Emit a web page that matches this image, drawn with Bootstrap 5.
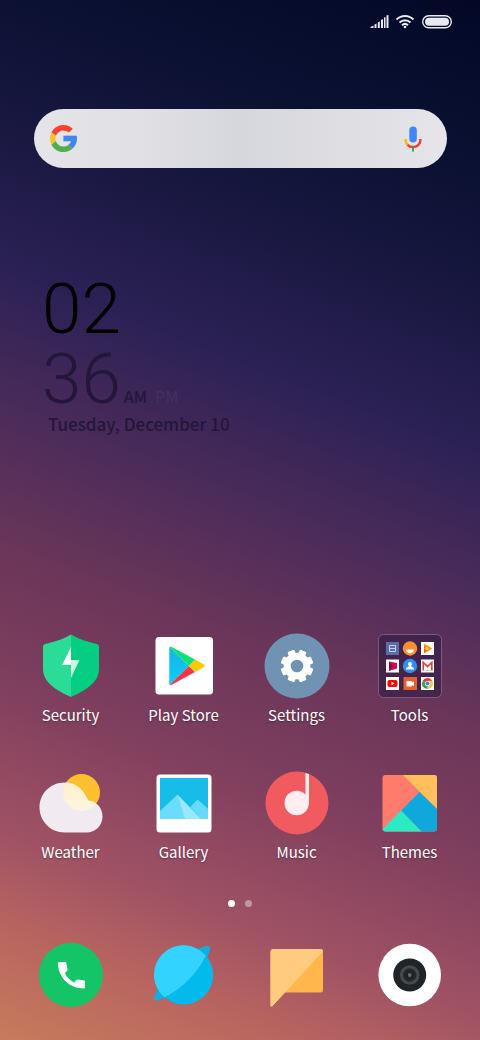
<!DOCTYPE html>
<html lang="en">
<head>
<meta charset="utf-8">
<meta name="viewport" content="width=device-width, initial-scale=1">
<title>Home screen</title>
<link href="https://cdn.jsdelivr.net/npm/bootstrap@5.3.0/dist/css/bootstrap.min.css" rel="stylesheet">
<style>
  body {
    font-family: "Noto Sans CJK SC", "Noto Sans", sans-serif;
    color: #fff;
    background: linear-gradient(201deg, #020826 0%, #0b1132 14%, #17173f 24%, #2c2155 37%, #4a2b5a 48%, #6b3659 60%, #803f5e 71%, #a05264 83%, #b66360 90%, #c87b5c 100%);
    min-height: 100vh;
  }
  .status-icons { padding: 14px 28px 0; gap: 6px; height: 44px; }
  .search-wrap { padding: 65px 33px 0 34px; }
  .search-bar {
    height: 59px; border-radius: 30px; padding: 0 20px 0 16px;
    background: linear-gradient(90deg, #e5e4e8 0%, #e0e0e5 25%, #d6d7dc 50%, #dddde2 72%, #e6e5e9 100%);
  }
  .search-bar input { outline: 0; min-width: 0; }
  .clock { padding: 106px 42px 0; }
  .clock-digits { font-family: Roboto, "Noto Sans", sans-serif; font-size: 71px; line-height: 70px; font-weight: 300; }
  .hours { color: #000; }
  .minutes, .meridiem, .date { color: #24163a; }
  .meridiem, .date { font-weight: 500; }
  .meridiem { font-size: 16px; line-height: 24px; margin-left: 3px; }
  .meridiem-off { color: #452e60; margin-left: 8px; }
  .date { font-size: 17px; line-height: 20px; padding-left: 6px; }
  .launcher { padding: 0 14px; }
  .app { color: #fff; font-size: 15px; line-height: 24px; text-shadow: 0 1px 2px rgba(0,0,0,.35); }
  .app svg { width: 66px; height: 66px; display: block; margin-bottom: 4px; }
  .app-rows { row-gap: 43px; }
  .page-dots { gap: 10px; padding: 36px 0 35px; }
  .dot { width: 7px; height: 7px; padding: 0; border: 0; border-radius: 50%; background: #fff; }
  .dot-off { opacity: .4; }
  .dock { padding-bottom: 28px; }
</style>
</head>
<body class="d-flex flex-column">
<header class="status-icons d-flex justify-content-end align-items-start">
  <svg width="19" height="15" viewBox="0 0 19 15" fill="#e9eaf0" role="img" aria-label="Signal">
    <path d="M.5 14V13L3.500 11.500V14zM4.500 10.500L6.500 9.500V14H4.500zM7.800 8.500L9.800 7.500V14H7.800zM11 6L13 5V14H11zM14 3.500L15.500 3V14H14zM16.500 1.500L18.500 1V14H16.500z"/>
  </svg>
  <svg width="20" height="15" viewBox="0 0 20 15" fill="none" stroke="#e9eaf0" stroke-width="2" role="img" aria-label="Wi-Fi">
    <path d="M1.500 5.500C6.500.7 13.500.7 18.500 5.500M4.500 8.500C7.700 5.500 12.300 5.500 15.500 8.500M7 11.200C8.900 9.500 11.100 9.500 13 11.200"/>
    <circle cx="10" cy="13" r="1.300" fill="#e9eaf0" stroke="none"/>
  </svg>
  <svg width="31" height="15" viewBox="0 0 31 15" fill="#e9eaf0" role="img" aria-label="Battery full">
    <rect x="1.700" y="1.700" width="28.600" height="12" rx="6" fill="none" stroke="#e9eaf0" stroke-width="1.400"/>
    <rect x="4" y="3.700" width="24" height="8" rx="4"/>
  </svg>
</header>

<div class="search-wrap">
  <form class="search-bar d-flex align-items-center" role="search">
    <svg width="27" height="27" viewBox="4 4 40 40" aria-hidden="true">
      <path fill="#fbc02d" d="M43.600 20H24v8h11.300C33.700 32.700 29.200 36 24 36c-6.600 0-12-5.400-12-12s5.400-12 12-12c3.100 0 5.800 1.200 8 3l5.600-5.600C34 6.100 29.300 4 24 4 13 4 4 13 4 24s9 20 20 20 20-9 20-20c0-1.300-.1-2.700-.4-4z"/>
      <path fill="#f44336" d="M6.300 14.700l6.600 4.800C14.700 15.100 19 12 24 12c3.100 0 5.800 1.200 8 3l5.600-5.600C34 6.100 29.300 4 24 4 16.300 4 9.700 8.300 6.300 14.700z"/>
      <path fill="#4caf50" d="M24 44c5.200 0 9.900-2 13.400-5.200l-6.200-5.200C29.200 35.100 26.700 36 24 36c-5.200 0-9.600-3.300-11.300-7.900l-6.500 5C9.500 39.600 16.200 44 24 44z"/>
      <path fill="#4285f4" d="M43.600 20H24v8h11.300c-.8 2.200-2.200 4.200-4.100 5.600l6.200 5.200C37 39.200 44 34 44 24c0-1.300-.1-2.700-.4-4z"/>
    </svg>
    <input class="flex-grow-1 border-0 bg-transparent" type="text" aria-label="Search">
    <button class="btn p-0 border-0 d-flex" type="button" aria-label="Voice search">
      <svg width="28" height="28" viewBox="0 0 28 28" fill="none" stroke-width="2.500">
        <rect x="10.300" y="1.500" width="7.500" height="16" rx="3.750" fill="#4285f4"/>
        <path stroke="#fbbc05" d="M6.500 14C6.500 17 7.500 19 9 20.200"/>
        <path stroke="#ea4335" d="M8.600 19.800C11.500 22.800 16.500 22.800 19.400 19.800C21 18.200 21.500 16.500 21.500 14"/>
        <path stroke="#34a853" stroke-width="2" d="M14 22.500V26.500"/>
      </svg>
    </button>
  </form>
</div>

<section class="clock">
  <div class="clock-digits hours">02</div>
  <div class="d-flex align-items-baseline">
    <span class="clock-digits minutes">36</span>
    <span class="meridiem">AM</span><span class="meridiem meridiem-off">PM</span>
  </div>
  <div class="date">Tuesday, December 10</div>
</section>

<main class="launcher mt-auto">
  <div class="app-rows row row-cols-4 g-0">
    <a href="#security" class="app col d-flex flex-column align-items-center text-decoration-none">
      <svg viewBox="0 0 66 66" aria-hidden="true">
        <path fill="#2bdc96" d="M33 1.500C26 6 16 9 7 11Q5 11.500 5 13.500V36C5 50 20 58 33 64z"/>
        <path fill="#04cf80" d="M33 1.500C40 6 50 9 59 11Q61 11.500 61 13.500V36C61 50 46 58 33 64z"/>
        <path fill="#fff" d="M33 14L24 32H33z"/>
        <path fill="#c9f9e4" d="M33 27H41.500L33 45z"/>
      </svg>Security</a>
    <a href="#play" class="app col d-flex flex-column align-items-center text-decoration-none">
      <svg viewBox="0 0 66 66" aria-hidden="true">
        <defs><linearGradient id="playBlue" x1="0" y1="0" x2="0" y2="1"><stop offset="0" stop-color="#12b5e0"/><stop offset="1" stop-color="#0fcdfb"/></linearGradient></defs>
        <rect x="4.500" y="4" width="57.500" height="57.500" rx="3.500" fill="#fff"/>
        <path fill="url(#playBlue)" d="M18.500 14L38 33L18.500 52Q18.300 51 18.300 50V16Z"/>
        <path fill="#0be276" d="M18.500 14Q20 13.500 22 14.800L44 26.500L38 33z"/>
        <path fill="#ef3547" d="M18.500 52Q20 52.500 22 51L44 39L38 33z"/>
        <path fill="#fdc70c" d="M44 26.500L53 31.500Q54.500 32.800 53 34L44 39L38 33z"/>
      </svg>Play Store</a>
    <a href="#settings" class="app col d-flex flex-column align-items-center text-decoration-none">
      <svg viewBox="0 0 66 66" aria-hidden="true">
        <circle cx="33" cy="33" r="32.500" fill="#7193b3"/>
        <g fill="#fff" transform="translate(33 33)">
          <rect x="-3.700" y="-16.300" width="7.400" height="32.600" rx="1.300" transform="rotate(22.500)"/><rect x="-3.700" y="-16.300" width="7.400" height="32.600" rx="1.300" transform="rotate(67.500)"/><rect x="-3.700" y="-16.300" width="7.400" height="32.600" rx="1.300" transform="rotate(112.500)"/><rect x="-3.700" y="-16.300" width="7.400" height="32.600" rx="1.300" transform="rotate(157.500)"/>
          <circle r="13.300"/>
        </g>
        <circle cx="33" cy="33" r="6.300" fill="#7193b3"/>
      </svg>Settings</a>
    <a href="#tools" class="app col d-flex flex-column align-items-center text-decoration-none">
      <svg viewBox="0 0 66 66" aria-hidden="true">
        <rect x="1.500" y="1.500" width="63" height="63" rx="5" fill="#2b1840" fill-opacity=".55" stroke="#8a7191" stroke-opacity=".7"/>
        <rect x="9" y="9" width="13" height="13" fill="#5a6cab"/>
        <path d="M12.500 12.500H18.500V18.500H12.500zM12.500 15.500H18.500" fill="none" stroke="#c7cff0"/>
        <circle cx="33" cy="15.500" r="7.200" fill="#f78f2f"/><path fill="#fff" d="M29 16.500H37C36.500 21.500 29.500 21.500 29 16.500"/>
        <rect x="44" y="9" width="13" height="13" fill="#fff"/><path fill="#ffa313" d="M47 10.500L55.500 15.500L47 20.500z"/><path fill="#f0592b" d="M47 13L51 15.500L47 20.500z"/><circle cx="50" cy="15.500" r="2.300" fill="#ffd23c" stroke="#e8662b" stroke-width=".7"/>
        <rect x="9" y="26.500" width="13" height="13" fill="#fff"/><path fill="#d00c50" d="M12 28.500L20 30V35.500L12 38z"/><path fill="#8d0b42" d="M12 28.500L16 33L12 38z"/>
        <circle cx="33" cy="33" r="7.200" fill="#2b91f4"/><circle cx="33" cy="31" r="2" fill="#fff"/><path fill="#fff" d="M31.800 31.500H34.200V33.500L37 35V36.500H29V35L31.800 33.500z"/>
        <rect x="44" y="26.500" width="13" height="13" fill="#fff"/><path fill="none" stroke="#dc4639" stroke-width="1.700" d="M46.200 37.500V29.500L50.500 33.500L54.800 29.500V37.500"/><path fill="none" stroke="#bbb" stroke-width=".6" d="M47.500 37.500H53.500"/>
        <rect x="9" y="44" width="13" height="13" fill="#fff"/><rect x="10.500" y="47" width="10" height="7" rx="2" fill="#f00"/><path fill="#fff" d="M14.500 48.800L17.500 50.500L14.500 52.200z"/>
        <rect x="26.500" y="44" width="13.500" height="13" fill="#e0622f"/><path fill="#fff" d="M29.500 48H34.800V49.500L37 48.500V53L34.800 52V53.500H29.500z"/>
        <rect x="44" y="44" width="13" height="13" fill="#fff"/>
        <g transform="translate(50.500 50.500)"><path fill="#e23a2e" d="M0 0L-4.800 -2.800A5.500 5.500 0 0 1 4.800 -2.800z"/><path fill="#fcc934" d="M0 0V-2.800H4.800A5.500 5.500 0 0 1 0 5.500z"/><path fill="#2ea350" d="M0 0L0 5.500A5.500 5.500 0 0 1 -4.800 -2.800z"/><circle r="2.600" fill="#fff"/><circle r="2" fill="#4285f4"/></g>
      </svg>Tools</a>
    <a href="#weather" class="app col d-flex flex-column align-items-center text-decoration-none">
      <svg viewBox="0 0 66 66" aria-hidden="true">
        <defs><linearGradient id="cloudSun" x1="0" y1="0" x2="0" y2="1"><stop offset="0" stop-color="#ffefc4"/><stop offset="1" stop-color="#fdf5e2"/></linearGradient>
        <clipPath id="cloudClip"><path d="M26.500 12.500C38 12.500 46 20 50 30.500C58 31 64.500 37.500 64.500 46.500C64.500 55.500 57.500 62.500 48.500 62.500H26.500C12.500 62.500 1.500 51 1.500 37.500C1.500 23.500 12.500 12.500 26.500 12.500z"/></clipPath></defs>
        <circle cx="43.500" cy="22.500" r="18.500" fill="#fcbf2d"/>
        <g clip-path="url(#cloudClip)"><rect width="66" height="66" fill="#f1eaf0"/><circle cx="43.500" cy="22.500" r="18.500" fill="url(#cloudSun)"/></g>
      </svg>Weather</a>
    <a href="#gallery" class="app col d-flex flex-column align-items-center text-decoration-none">
      <svg viewBox="0 0 66 66" aria-hidden="true">
        <rect x="5.500" y="4.500" width="55" height="58" rx="3.500" fill="#fff"/>
        <rect x="9" y="8" width="48" height="41" fill="#17bce8"/>
        <path fill="#4bd1f8" d="M37 40L46.500 29.500L57 39V49H37z"/><path fill="#66dafd" d="M40 36.500L46.500 29.500L57 39V49H50z"/>
        <path fill="#6adcff" d="M9 41L26.500 24.500L36 49H9z"/><path fill="#9ae8ff" d="M26.500 24.500L50 49H34z"/>
      </svg>Gallery</a>
    <a href="#music" class="app col d-flex flex-column align-items-center text-decoration-none">
      <svg viewBox="0 0 66 66" aria-hidden="true">
        <circle cx="33" cy="33" r="31.500" fill="#f15b60"/>
        <circle cx="32.700" cy="33" r="12.200" fill="#ffedef"/><path fill="#ffedef" d="M41.500 3L45 4V33H41.500z"/>
      </svg>Music</a>
    <a href="#themes" class="app col d-flex flex-column align-items-center text-decoration-none">
      <svg viewBox="0 0 66 66" aria-hidden="true">
        <clipPath id="themeClip"><rect x="5.500" y="5" width="54.500" height="56.500" rx="3"/></clipPath>
        <g clip-path="url(#themeClip)"><rect width="66" height="66" fill="#ff7c6d"/><path fill="#ffc05c" d="M26 5H60V39z"/><path fill="#0fa8dc" d="M42.500 22L60 39V62H45L24 40.500z"/><path fill="#2bebc4" d="M24 40.500L45 62H3z"/></g>
      </svg>Themes</a>
  </div>
  <nav class="page-dots d-flex justify-content-center" aria-label="Home pages">
    <button class="dot" type="button" aria-label="Page 1"></button>
    <button class="dot dot-off" type="button" aria-label="Page 2"></button>
  </nav>
  <nav class="dock row row-cols-4 g-0" aria-label="Dock">
    <a href="#phone" class="app col d-flex flex-column align-items-center" aria-label="Phone">
      <svg viewBox="0 0 66 66"><circle cx="33" cy="33" r="32" fill="#13c567"/><path fill="#fff" d="M20 21Q20 20 21 20H27.500Q28.200 20 28.300 21L29.500 27.500Q29.600 28.500 29 29L26.800 31C28.500 35 32 38.500 36.500 40.500L38 38Q38.500 37.300 39.500 37.400L46 38.500Q47 38.700 47 39.500V45.500Q47 46.500 46 46.500C31.500 46.500 20 35.500 20 21z"/></svg></a>
    <a href="#browser" class="app col d-flex flex-column align-items-center" aria-label="Browser">
      <svg viewBox="0 0 66 66"><path fill="#12aee2" d="M46 8C51 4.500 57 3 58.500 4.500C60 6 58.500 12 54 19zM9 43C5 49 2.500 56 4 58C6 60 14 56 20 52z"/><circle cx="32.700" cy="33" r="29.500" fill="#02baeb"/><path fill="#33d3ff" d="M54.800 13.500A29.500 29.500 0 1 0 13.300 55.200C26 50 46 33 54.800 13.500z"/></svg></a>
    <a href="#messages" class="app col d-flex flex-column align-items-center" aria-label="Messages">
      <svg viewBox="0 0 66 66"><path fill="#ffb74b" d="M9.500 7H56.500Q59 7 59 9.500V48Q59 50.500 56.500 50.500H21L8.500 64Q6.500 65.500 6.500 63V10Q6.500 7 9.500 7z"/><path fill="#ffcb7f" d="M9.500 7H56.500Q59 7 59 9.500L21 50.500L8.500 64Q6.500 65.500 6.500 63V10Q6.500 7 9.500 7z"/></svg></a>
    <a href="#camera" class="app col d-flex flex-column align-items-center" aria-label="Camera">
      <svg viewBox="0 0 66 66"><circle cx="32.700" cy="33" r="31.300" fill="#fff"/><circle cx="32.700" cy="33" r="16.500" fill="#212426"/><circle cx="32.700" cy="33" r="8.300" fill="#26292b" stroke="#47494c" stroke-width="3"/><circle cx="32.700" cy="33" r="4.500" fill="#1f2224"/><circle cx="32.700" cy="33" r="1.900" fill="#66686b"/></svg></a>
  </nav>
</main>
<script src="https://cdn.jsdelivr.net/npm/bootstrap@5.3.0/dist/js/bootstrap.bundle.min.js"></script>
</body>
</html>
